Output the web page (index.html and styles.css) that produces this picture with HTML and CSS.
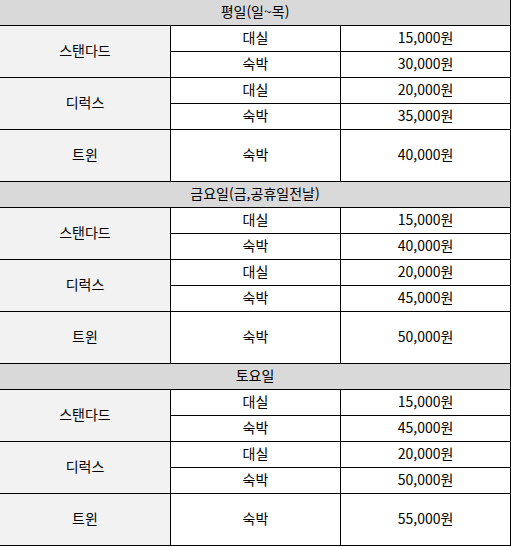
FILE: index.html
```html
<!DOCTYPE html>
<html lang="ko">
<head>
<meta charset="utf-8">
<title>요금표</title>
<link rel="stylesheet" href="styles.css">
</head>
<body>
<table class="rates">
  <colgroup>
    <col class="c1"><col class="c2"><col class="c3">
  </colgroup>
  <tbody>
    <tr class="head"><th colspan="3">평일(일~목)</th></tr>
    <tr class="row"><td class="room" rowspan="2">스탠다드</td><td>대실</td><td>15,000원</td></tr>
    <tr class="row"><td>숙박</td><td>30,000원</td></tr>
    <tr class="row"><td class="room" rowspan="2">디럭스</td><td>대실</td><td>20,000원</td></tr>
    <tr class="row"><td>숙박</td><td>35,000원</td></tr>
    <tr class="tall"><td class="room">트윈</td><td>숙박</td><td>40,000원</td></tr>

    <tr class="head"><th colspan="3">금요일(금,공휴일전날)</th></tr>
    <tr class="row"><td class="room" rowspan="2">스탠다드</td><td>대실</td><td>15,000원</td></tr>
    <tr class="row"><td>숙박</td><td>40,000원</td></tr>
    <tr class="row"><td class="room" rowspan="2">디럭스</td><td>대실</td><td>20,000원</td></tr>
    <tr class="row"><td>숙박</td><td>45,000원</td></tr>
    <tr class="tall"><td class="room">트윈</td><td>숙박</td><td>50,000원</td></tr>

    <tr class="head"><th colspan="3">토요일</th></tr>
    <tr class="row"><td class="room" rowspan="2">스탠다드</td><td>대실</td><td>15,000원</td></tr>
    <tr class="row"><td>숙박</td><td>45,000원</td></tr>
    <tr class="row"><td class="room" rowspan="2">디럭스</td><td>대실</td><td>20,000원</td></tr>
    <tr class="row"><td>숙박</td><td>50,000원</td></tr>
    <tr class="tall"><td class="room">트윈</td><td>숙박</td><td>55,000원</td></tr>
  </tbody>
</table>
</body>
</html>
```
FILE: styles.css
```css
html, body {
  margin: 0;
  padding: 0;
  background: #ffffff;
}

body {
  font-family: "Noto Sans CJK KR", "Noto Sans", sans-serif;
  font-size: 14px;
  color: #000000;
}

.rates {
  border-collapse: separate;
  border-spacing: 0;
  table-layout: fixed;
  width: 511px;
}

.c1 { width: 171px; }
.c2 { width: 170px; }
.c3 { width: 170px; }

.rates th,
.rates td {
  box-sizing: border-box;
  border: 0;
  border-right: 1px solid #000000;
  border-bottom: 1px solid #000000;
  padding: 0 0 4px 0;
  text-align: center;
  vertical-align: middle;
  font-weight: normal;
  line-height: 16px;
  white-space: nowrap;
}

.rates th {
  background: #d9d9d9;
}

.rates td.room {
  background: #f2f2f2;
}

.head th { height: 26px; }
.row td { height: 26px; }
.tall td { height: 52px; }
```
